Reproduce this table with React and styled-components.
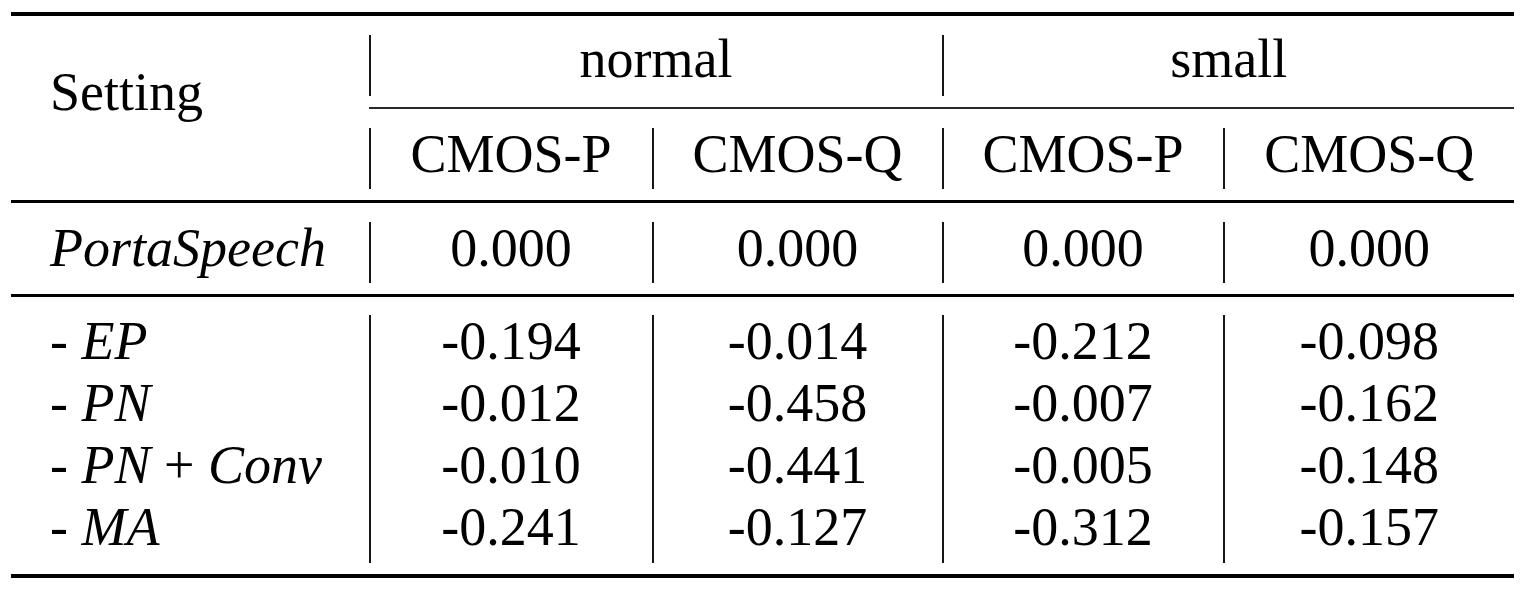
import styled, { createGlobalStyle } from 'styled-components'

const Global = createGlobalStyle`
    html, body {
        margin: 0;
        background: #ffffff;
    }
    body {
        font-family: "Liberation Serif", "Times New Roman", serif;
        color: #000;
    }
`

const COLS = '357.5px 283px 290px 281px 291.5px'

const Page = styled.div`
    padding: 12px 0 0 11px;
`

const Table = styled.div`
    width: 1503px;
    font-size: 54px;
`

const Rule = styled.div`
    height: ${(p) => p.$h}px;
    background: #000;
`

const Band = styled.div`
    display: grid;
    grid-template-columns: ${COLS};
    grid-template-rows: ${(p) => p.$rows || 'auto'};
    padding: ${(p) => p.$top}px 0 ${(p) => p.$bottom}px;
`

const Cell = styled.div`
    grid-column: ${(p) => p.$col || 'auto'};
    grid-row: ${(p) => p.$row || 'auto'};
    text-align: ${(p) => (p.$left ? 'left' : 'center')};
    padding-left: ${(p) => (p.$left ? '39px' : '0')};
    padding-top: ${(p) => p.$pt || 0}px;
    border-left: ${(p) => (p.$divider ? '2px solid #161616' : 'none')};
`

const Line = styled.div`
    height: ${(p) => p.$h || 61.7}px;
    line-height: ${(p) => p.$lh || 52}px;
    white-space: nowrap;
`

const CmidRule = styled.div`
    grid-column: 2 / -1;
    grid-row: 3;
    background: #2a2a2a;
`

const I = styled.em`
    font-style: italic;
`

const heads = ['CMOS-P', 'CMOS-Q', 'CMOS-P', 'CMOS-Q']
const porta = ['0.000', '0.000', '0.000', '0.000']

const ablations = [
    { label: <>- <I>EP</I></>, values: ['-0.194', '-0.014', '-0.212', '-0.098'] },
    { label: <>- <I>PN</I></>, values: ['-0.012', '-0.458', '-0.007', '-0.162'] },
    { label: <>- <I>PN</I> + <I>Conv</I></>, values: ['-0.010', '-0.441', '-0.005', '-0.148'] },
    { label: <>- <I>MA</I></>, values: ['-0.241', '-0.127', '-0.312', '-0.157'] },
]

export default function App() {
    return (
        <>
            <Global />
            <Page>
                <Table>
                    <Rule $h={4} />

                    <Band $top={19} $bottom={11} $rows="61px 11px 2px 19px 61px">
                        <Cell $left $col="1" $row="1 / -1" $pt={31}>
                            <Line>Setting</Line>
                        </Cell>
                        <Cell $divider $col="2 / 4" $row="1">
                            <Line $h={61} $lh={48}>normal</Line>
                        </Cell>
                        <Cell $divider $col="4 / 6" $row="1">
                            <Line $h={61} $lh={48}>small</Line>
                        </Cell>
                        <CmidRule />
                        {heads.map((h, i) => (
                            <Cell key={i} $divider $col={`${i + 2}`} $row="5">
                                <Line $h={61}>{h}</Line>
                            </Cell>
                        ))}
                    </Band>

                    <Rule $h={2.6} />

                    <Band $top={19.4} $bottom={11}>
                        <Cell $left>
                            <Line $h={61}><I>PortaSpeech</I></Line>
                        </Cell>
                        {porta.map((v, i) => (
                            <Cell key={i} $divider>
                                <Line $h={61}>{v}</Line>
                            </Cell>
                        ))}
                    </Band>

                    <Rule $h={2.8} />

                    <Band $top={18} $bottom={11}>
                        <Cell $left>
                            {ablations.map((a, i) => (
                                <Line key={i} $h={62}>{a.label}</Line>
                            ))}
                        </Cell>
                        {[0, 1, 2, 3].map((c) => (
                            <Cell key={c} $divider>
                                {ablations.map((a, i) => (
                                    <Line key={i} $h={62}>{a.values[c]}</Line>
                                ))}
                            </Cell>
                        ))}
                    </Band>

                    <Rule $h={4} />
                </Table>
            </Page>
        </>
    )
}
